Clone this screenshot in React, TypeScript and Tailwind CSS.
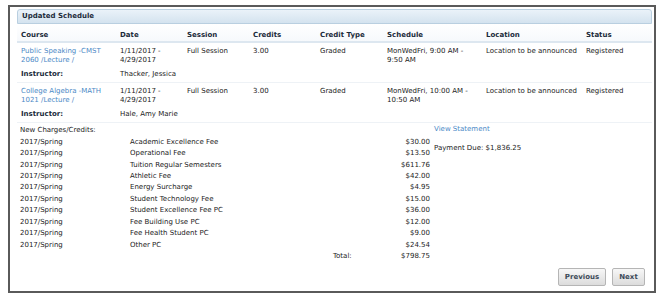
const courses = [
  {
    name: 'Public Speaking -CMST 2060 /Lecture /',
    date: '1/11/2017 - 4/29/2017',
    schedule: 'MonWedFri, 9:00 AM - 9:50 AM',
    instructor: 'Thacker, Jessica',
  },
  {
    name: 'College Algebra -MATH 1021 /Lecture /',
    date: '1/11/2017 - 4/29/2017',
    schedule: 'MonWedFri, 10:00 AM - 10:50 AM',
    instructor: 'Hale, Amy Marie',
  },
]

const charges = [
  ['Academic Excellence Fee', '$30.00'],
  ['Operational Fee', '$13.50'],
  ['Tuition Regular Semesters', '$611.76'],
  ['Athletic Fee', '$42.00'],
  ['Energy Surcharge', '$4.95'],
  ['Student Technology Fee', '$15.00'],
  ['Student Excellence Fee PC', '$36.00'],
  ['Fee Building Use PC', '$12.00'],
  ['Fee Health Student PC', '$9.00'],
  ['Other PC', '$24.54'],
]

const cols = 'grid grid-cols-[99px_67px_66px_67px_67px_99px_100px_69px]'

export default function App() {
  return (
    <div className="h-[298px] w-[663px] bg-white pl-2 pt-[5px] font-['DejaVu_Sans',sans-serif] text-[7px] leading-[9px] text-[#222]">
      <div className="flex h-[288px] w-[648px] flex-col border-2 border-[#5a5a5a] pl-[7px] pr-[2px] pt-[2px]">
        <div className="flex h-[15px] items-center rounded-t-[3px] border border-[#b9cfe0] bg-gradient-to-b from-[#eaf2f9] to-[#d4e3ef] pl-[4px] font-bold text-[#1d2b3a]">
          Updated Schedule
        </div>

        <div className={`${cols} h-[19px] items-center border-b-2 border-[#dde7f0] bg-gradient-to-b from-white to-[#f6f9fc] pl-[4px] pt-[5px] font-bold text-[#1a2a3a]`}>
          <span>Course</span>
          <span>Date</span>
          <span>Session</span>
          <span>Credits</span>
          <span>Credit Type</span>
          <span>Schedule</span>
          <span>Location</span>
          <span>Status</span>
        </div>

        {courses.map((c, i) => (
          <div key={i} className="border-b border-[#eef2f6]">
            <div className={`${cols} pl-[4px] pt-[4px]`}>
              <span className="pr-2 text-[#4b89c6]">{c.name}</span>
              <span className="pr-2">{c.date}</span>
              <span>Full Session</span>
              <span>3.00</span>
              <span>Graded</span>
              <span className="pr-3">{c.schedule}</span>
              <span>Location to be announced</span>
              <span>Registered</span>
            </div>
            <div className={`${cols} h-[17px] pl-[4px] pt-[5px]`}>
              <span className="font-bold text-[#1a2a3a]">Instructor:</span>
              <span className="col-span-3">{c.instructor}</span>
            </div>
          </div>
        ))}

        <div className="flex pl-[3px] pt-[2px]">
          <div className="grid w-[410px] grid-cols-[110px_176px_124px] auto-rows-[11.45px] items-center">
            <span className="col-span-3">New Charges/Credits:</span>
            {charges.map(([label, amount]) => (
              <div key={label} className="contents">
                <span>2017/Spring</span>
                <span>{label}</span>
                <span className="text-right">{amount}</span>
              </div>
            ))}
            <span />
            <span className="pl-[203px] text-left whitespace-nowrap">Total:</span>
            <span className="text-right">$798.75</span>
          </div>
          <div className="flex flex-col pl-[4px]">
            <span className="text-[#4b89c6]">View Statement</span>
            <span className="pt-[10px]">Payment Due: $1,836.25</span>
          </div>
        </div>

        <div className="mt-auto flex justify-end gap-[6px] pb-[5px] pr-[7px]">
          <button className="h-[18px] w-[48px] rounded-[2px] border border-[#b5b5b5] bg-gradient-to-b from-[#f7f7f7] to-[#dcdcdc] font-bold text-[#3c4a58]">
            Previous
          </button>
          <button className="h-[18px] w-[33px] rounded-[2px] border border-[#b5b5b5] bg-gradient-to-b from-[#f7f7f7] to-[#dcdcdc] font-bold text-[#3c4a58]">
            Next
          </button>
        </div>
      </div>
    </div>
  )
}
